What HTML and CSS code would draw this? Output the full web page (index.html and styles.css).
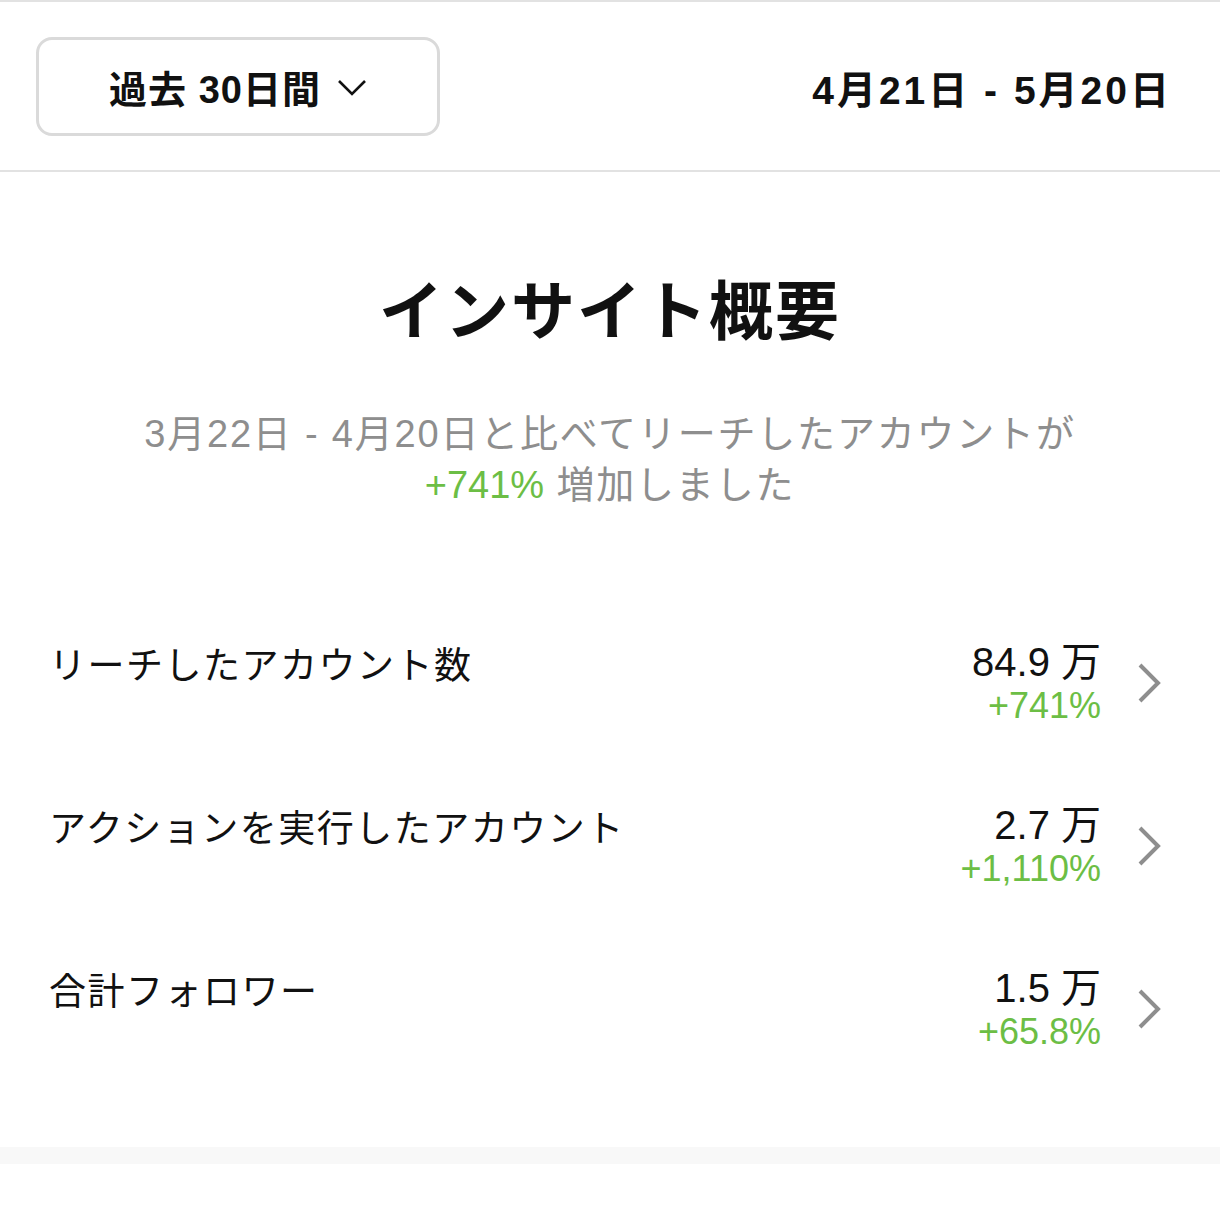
FILE: index.html
```html
<!DOCTYPE html>
<html lang="ja">
<head>
    <meta charset="UTF-8">
    <meta name="viewport" content="width=device-width, initial-scale=1.0">
    <title>インサイト</title>
    <link rel="stylesheet" href="styles.css">
</head>
<body>
    <header class="topbar">
        <button class="range-select">
            <span>過去 30日間</span>
            <svg class="chevron-down" width="30" height="18" viewBox="0 0 30 18">
                <path d="M2 2 L15 15 L28 2" fill="none" stroke="#111" stroke-width="2.6"/>
            </svg>
        </button>
        <div class="range-dates">4月21日 - 5月20日</div>
    </header>

    <section class="overview">
        <h1>インサイト概要</h1>
        <p class="summary">
            3月22日 - 4月20日と比べてリーチしたアカウントが<br>
            <span class="up">+741%</span> 増加しました
        </p>

        <ul class="stats">
            <li class="stat">
                <span class="stat-label">リーチしたアカウント数</span>
                <div class="stat-value">
                    <span class="num">84.9 万</span>
                    <span class="up">+741%</span>
                </div>
                <svg class="chevron" width="28" height="42" viewBox="0 0 28 42">
                    <path d="M4 3 L22 21 L4 39" fill="none" stroke="#8e8e8e" stroke-width="4"/>
                </svg>
            </li>
            <li class="stat">
                <span class="stat-label">アクションを実行したアカウント</span>
                <div class="stat-value">
                    <span class="num">2.7 万</span>
                    <span class="up">+1,110%</span>
                </div>
                <svg class="chevron" width="28" height="42" viewBox="0 0 28 42">
                    <path d="M4 3 L22 21 L4 39" fill="none" stroke="#8e8e8e" stroke-width="4"/>
                </svg>
            </li>
            <li class="stat">
                <span class="stat-label">合計フォロワー</span>
                <div class="stat-value">
                    <span class="num">1.5 万</span>
                    <span class="up">+65.8%</span>
                </div>
                <svg class="chevron" width="28" height="42" viewBox="0 0 28 42">
                    <path d="M4 3 L22 21 L4 39" fill="none" stroke="#8e8e8e" stroke-width="4"/>
                </svg>
            </li>
        </ul>
    </section>

    <div class="divider"></div>
</body>
</html>
```

FILE: styles.css
```css
body {
    margin: 0;
    background: #fff;
    color: #111;
    font-family: "Liberation Sans", "Noto Sans CJK JP", sans-serif;
}

.topbar {
    display: flex;
    align-items: center;
    justify-content: space-between;
    height: 168px;
    padding: 0 50px 0 36px;
    border-top: 2px solid #e2e2e2;
    border-bottom: 2px solid #e2e2e2;
}

.range-select {
    display: flex;
    align-items: center;
    justify-content: center;
    gap: 16px;
    width: 404px;
    height: 99px;
    margin-top: 1px;
    background: #fff;
    border: 3px solid #dadada;
    border-radius: 16px;
    font-family: inherit;
    font-size: 38px;
    font-weight: bold;
    letter-spacing: 1px;
    color: #111;
    padding: 0 0 0 0;
}

.chevron-down {
    margin-top: 2px;
}

.range-dates {
    font-size: 39px;
    font-weight: bold;
    letter-spacing: 3px;
    margin-right: -2px;
    margin-top: 1px;
}

.overview {
    text-align: center;
}

h1 {
    margin: 100px 0 0;
    font-size: 64px;
    font-weight: bold;
    line-height: 80px;
    letter-spacing: 2px;
}

.summary {
    margin: 57px 0 0;
    font-size: 38px;
    line-height: 51px;
    letter-spacing: 1.8px;
    color: #8e8e8e;
}

.summary .up {
    letter-spacing: 0;
}

.up {
    color: #6cbe45;
}

.stats {
    list-style: none;
    margin: 90px 0 0;
    padding: 0 56px 0 49px;
    text-align: left;
}

.stat {
    display: flex;
    align-items: center;
    height: 163px;
}

.stat-label {
    flex: 1;
    font-size: 37px;
    letter-spacing: 1.5px;
    margin-top: -40px;
}

.stat-value {
    display: flex;
    flex-direction: column;
    align-items: flex-end;
    font-size: 36px;
    line-height: 42px;
}

.stat-value .num {
    font-size: 40px;
    line-height: 46px;
    color: #111;
}

.chevron {
    margin-left: 35px;
}

.divider {
    height: 17px;
    margin-top: 57px;
    background: #f8f8f8;
}
```
